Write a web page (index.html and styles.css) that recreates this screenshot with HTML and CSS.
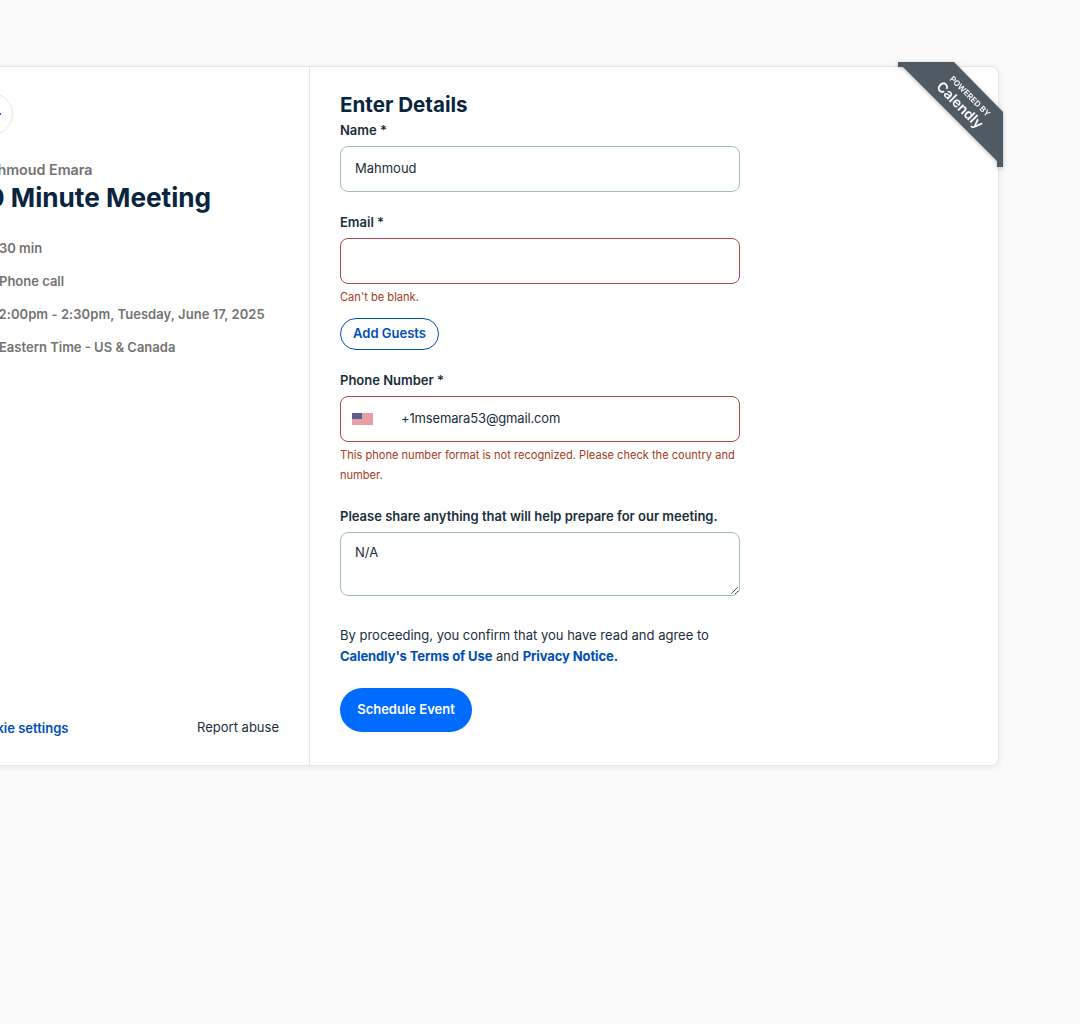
FILE: index.html
```html
<!DOCTYPE html>
<html>
<head>
	<title>Enter Details</title>
	<link rel="stylesheet" href="styles.css">
</head>
<body>
<div class="card">
	<div class="ribbon-wrap">
		<div class="ribbon">
			<span class="ribbon-small">POWERED BY</span>
			<span class="ribbon-big">Calendly</span>
		</div>
	</div>
	<div class="side">
		<div class="back">
			<svg width="18" height="18" viewBox="0 0 18 18" fill="none" stroke="#006bff" stroke-width="2"><path d="M18 9H3M8 4L3 9l5 5"/></svg>
		</div>
		<div class="host">Mahmoud Emara</div>
		<h1 class="title">30 Minute Meeting</h1>
		<div class="detail">30 min</div>
		<div class="detail">Phone call</div>
		<div class="detail detail-date">12:00pm - 2:30pm, Tuesday, June 17, 2025</div>
		<div class="detail">Eastern Time - US &amp; Canada</div>
		<div class="side-foot">
			<a class="foot-link">Cookie settings</a>
			<a class="foot-plain">Report abuse</a>
		</div>
	</div>
	<div class="main">
		<h2 class="heading">Enter Details</h2>
		<form class="form">
			<div class="group">
				<label class="label">Name *</label>
				<input class="field" type="text" value="Mahmoud">
			</div>
			<div class="group group-tight">
				<label class="label">Email *</label>
				<input class="field bad" type="text">
				<div class="error">Can't be blank.</div>
			</div>
			<button class="guests" type="button">Add Guests</button>
			<div class="group">
				<label class="label">Phone Number *</label>
				<div class="phone">
					<svg class="flag" width="21" height="12" viewBox="0 0 21 12">
						<rect width="21" height="12" fill="#f2c4c7"/>
						<path d="M0 1h21M0 3h21M0 5h21M0 7h21M0 9h21M0 11h21" stroke="#dc7a82" stroke-width="1"/>
						<rect width="10" height="6" fill="#5a5f8f"/>
					</svg>
					<input class="field bad phone-input" type="text" value="+1msemara53@gmail.com">
				</div>
				<div class="error">This phone number format is not recognized. Please check the country and number.</div>
			</div>
			<div class="group">
				<label class="label">Please share anything that will help prepare for our meeting.</label>
				<textarea class="field area">N/A</textarea>
			</div>
			<p class="consent">By proceeding, you confirm that you have read and agree to <a class="terms">Calendly's Terms of Use</a> and <a class="terms">Privacy Notice.</a></p>
			<button class="submit" type="button">Schedule Event</button>
		</form>
	</div>
</div>
</body>
</html>
```
FILE: styles.css
```css
* {
	box-sizing: border-box;
}
body {
	margin: 0;
	height: 1024px;
	overflow: hidden;
	background: #fafafa;
	font-family: "Inter", "Liberation Sans", sans-serif;
	color: #0a2540;
}
.card {
	position: relative;
	display: flex;
	width: 1050px;
	height: 700px;
	margin: 66px 0 0 -51px;
	background: #fff;
	border: 1px solid #e6e6e6;
	border-radius: 8px;
	box-shadow: 0 1px 6px rgba(0, 0, 0, 0.08);
}
.side {
	display: flex;
	flex-direction: column;
	width: 360px;
	padding: 26px 30px 27px 30px;
	border-right: 1px solid #e6e6e6;
}
.back {
	display: flex;
	align-items: center;
	justify-content: center;
	width: 42px;
	height: 42px;
	margin-bottom: 25px;
	margin-left: -9px;
	border: 1px solid #e6e6e6;
	border-radius: 50%;
}
.host {
	margin-left: -4px;
	font-size: 14.3px;
	font-weight: 600;
	line-height: 20px;
	white-space: nowrap;
	color: #737373;
}
.title {
	margin: 1px 0 23px -10px;
	font-size: 26.2px;
	font-weight: 700;
	line-height: 34px;
	white-space: nowrap;
	color: #0a2540;
}
.detail {
	margin-bottom: 13px;
	padding-left: 19px;
	font-size: 13px;
	font-weight: 600;
	line-height: 20px;
	white-space: nowrap;
	color: #737373;
}
.detail-date {
	margin-left: -6px;
	letter-spacing: 0.06px;
}
.side-foot {
	display: flex;
	justify-content: space-between;
	margin-top: auto;
	font-size: 13px;
	line-height: 20px;
}
.foot-link {
	margin-left: -9px;
	font-weight: 600;
	color: #004eba;
}
.foot-plain {
	margin-top: -1px;
	color: #1a2e3b;
}
.main {
	flex: 1;
	padding: 26px 30px;
}
.heading {
	margin: 0 0 1px;
	font-size: 20.6px;
	font-weight: 700;
	line-height: 24px;
	color: #0a2540;
}
.form {
	width: 400px;
}
.group {
	margin-bottom: 18px;
}
.group-tight {
	margin-bottom: 10px;
}
.label {
	display: block;
	height: 28px;
	padding-top: 3px;
	font-size: 13px;
	font-weight: 600;
	line-height: 18px;
	color: #1a2e3b;
}
.field {
	display: block;
	width: 100%;
	height: 46px;
	padding: 0 14px 2px;
	background: #fff;
	border: 1px solid #a3bcc4;
	border-radius: 8px;
	font-family: inherit;
	font-size: 13px;
	color: #1a2e3b;
}
.bad {
	border-color: #ad4a4f;
}
.error {
	margin-top: 3px;
	padding-bottom: 1px;
	font-size: 11.1px;
	line-height: 20px;
	color: #a33c1c;
}
.guests {
	display: block;
	width: 99px;
	height: 32px;
	margin: 0 0 18px;
	padding: 0 0 2px;
	background: #fff;
	border: 1px solid #004eba;
	border-radius: 16px;
	font-family: inherit;
	font-size: 13px;
	font-weight: 600;
	color: #004eba;
}
.phone {
	position: relative;
}
.flag {
	position: absolute;
	top: 17px;
	left: 12px;
}
.phone-input {
	padding-left: 60px;
	letter-spacing: -0.15px;
}
.area {
	height: 64px;
	padding: 9px 14px;
	line-height: 20px;
}
.consent {
	margin: 29px 0 21px;
	font-size: 13px;
	line-height: 21px;
	color: #1a2e3b;
}
.terms {
	font-weight: 700;
	letter-spacing: -0.1px;
	color: #004eba;
}
.submit {
	display: block;
	width: 132px;
	height: 44px;
	padding: 0 0 2px;
	background: #006bff;
	border: 0;
	border-radius: 22px;
	font-family: inherit;
	font-size: 13px;
	font-weight: 600;
	color: #fff;
}
.ribbon-wrap {
	position: absolute;
	top: -5px;
	right: -5px;
	width: 105px;
	height: 105px;
	filter: drop-shadow(0 1px 2px rgba(0, 0, 0, 0.25));
}
.ribbon {
	position: relative;
	width: 105px;
	height: 105px;
	background: #505a62;
	clip-path: polygon(0 0, 56px 0, 105px 50px, 105px 105px, 99px 105px, 99px 99px, 5px 5px, 0 5px);
	color: #fff;
}
.ribbon-small {
	position: absolute;
	top: 28px;
	left: 46px;
	width: 50px;
	font-size: 8px;
	font-weight: 600;
	line-height: 10px;
	text-align: center;
	white-space: nowrap;
	transform: rotate(45deg);
}
.ribbon-big {
	position: absolute;
	top: 33px;
	left: 27px;
	width: 70px;
	font-size: 14px;
	font-weight: 600;
	line-height: 20px;
	text-align: center;
	transform: rotate(45deg);
}
```
